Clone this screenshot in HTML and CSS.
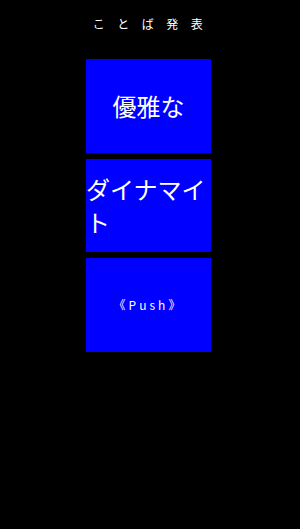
FILE: index.html
```
<!DOCTYPE HTML>
<html lang="ja">
	<head>
		<meta charset="UTF-8">
		<title>ことば発表</title>
		<link rel="stylesheet" href="styles.css">
	</head>
	<body>
		<h1 class="title">ことば発表</h1>
		<div class="cards">
			<div class="card">
				<p class="word">優雅な</p>
			</div>
			<div class="card">
				<p class="word">ダイナマイト</p>
			</div>
			<div class="card">
				<p class="push">《Push》</p>
			</div>
		</div>
	</body>
</html>
```

FILE: styles.css
```
body {
	margin: 0;
	padding-right: 3px;
	background: #000;
	color: #fff;
	font-family: "Noto Sans CJK JP", "Noto Sans", sans-serif;
	text-align: center;
}
.title {
	margin: 0;
	padding: 15px 0 0 11px;
	height: 44px;
	font-size: 12px;
	font-weight: normal;
	line-height: 18px;
	letter-spacing: 12.5px;
}
.cards {
	display: flex;
	flex-direction: column;
	align-items: center;
	gap: 6px;
}
.card {
	width: 125px;
	height: 93.5px;
	background: #0000ff;
	display: flex;
	align-items: center;
	justify-content: center;
	text-align: left;
}
.word {
	margin: 0;
	font-size: 24px;
	line-height: 33px;
}
.push {
	margin: 0;
	font-size: 12px;
	letter-spacing: 3px;
}
```
